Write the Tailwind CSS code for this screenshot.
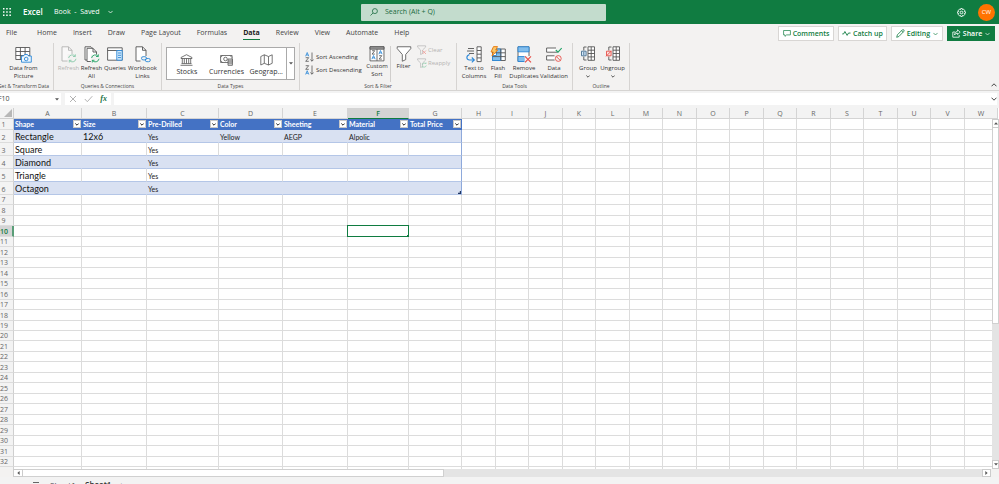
<!DOCTYPE html>
<html lang="en">
<head>
<meta charset="utf-8">
<title>Book - Excel</title>
<script src="https://cdn.jsdelivr.net/npm/@tailwindcss/browser@4"></script>
</head>
<body class="h-screen overflow-hidden flex flex-col bg-[#f3f2f1] font-['Open_Sans','Noto_Sans',sans-serif] text-[7px] leading-[8px] text-[#444]">

<!-- Title bar -->
<header class="h-6 shrink-0 bg-[#107c41] text-white grid grid-cols-[361fr_245fr_393fr] items-center">
  <div class="flex items-center pl-[3px]">
    <button aria-label="App launcher" class="w-2 h-2"><svg viewBox="0 0 8 8" class="w-2 h-2" fill="#fff"><path d="M0 0h1.5v1.5H0zM3.2 0h1.5v1.5H3.2zM6.4 0h1.5v1.5H6.4zM0 3.2h1.5v1.5H0zM3.2 3.2h1.5v1.5H3.2zM6.4 3.2h1.5v1.5H6.4zM0 6.4h1.5v1.5H0zM3.2 6.4h1.5v1.5H3.2zM6.4 6.4h1.5v1.5H6.4z"/></svg></button>
    <span class="ml-3 w-[31px] text-[8px] font-semibold">Excel</span>
    <button class="flex items-center gap-2 whitespace-nowrap">Book&nbsp; -&nbsp; Saved
      <svg viewBox="0 0 6 4" class="w-[5px] h-[4px]" fill="none" stroke="#fff" stroke-width=".9"><path d="M.5.7 3 3.2 5.500.7"/></svg></button>
  </div>
  <label class="h-[17px] rounded-[1px] bg-[#c3dccd] flex items-center text-[#1b6b40]">
    <svg viewBox="0 0 8 8" class="w-2 h-2 ml-[9px] mr-[7px]" fill="none" stroke="#1b6b40" stroke-width=".8"><circle cx="4.900" cy="3.100" r="2.500"/><path d="M3 5 .5 7.500"/></svg>
    <input type="text" aria-label="Search" placeholder="Search (Alt + Q)" class="flex-1 min-w-0 outline-none placeholder:text-[#1b6b40]">
  </label>
  <div class="flex items-center justify-end gap-3 pr-[4px]">
    <button aria-label="Settings"><svg viewBox="0 0 16 16" class="w-[9px] h-[9px] block" fill="none" stroke="#fff" stroke-width="1.600"><path d="M6.600 1h2.800l.5 2 1.700-.9 2.100 2.100-1 1.700 2.200.6v3l-2.200.6 1 1.700-2.100 2.100-1.700-.9-.5 2H6.600l-.5-2-1.700.9-2.100-2.100 1-1.700L1.100 9.500v-3l2.200-.6-1-1.700 2.100-2.100 1.700.9z"/><circle cx="8" cy="8" r="2.300"/></svg></button>
    <button aria-label="Account" class="w-[17px] h-[17px] rounded-full bg-[#ff7300] text-[6px] text-center">CW</button>
  </div>
</header>

<!-- Ribbon tabs -->
<div class="h-[19px] shrink-0 flex justify-between">
  <nav class="flex pl-[6px] pt-[5px] gap-4 whitespace-nowrap items-start text-[#444]">
    <a href="#" class="mr-1">File</a><a href="#">Home</a><a href="#">Insert</a><a href="#">Draw</a><a href="#">Page Layout</a><a href="#">Formulas</a>
    <a href="#" class="font-bold text-[#222] border-b border-[#107c41] pb-[2px]">Data</a>
    <a href="#">Review</a><a href="#">View</a><a href="#">Automate</a><a href="#">Help</a>
  </nav>
  <div class="flex gap-1 pt-[2px] pr-1 whitespace-nowrap font-semibold text-[#107c41]">
    <button class="h-[15px] w-[56px] border border-[#d8d6d4] bg-white flex items-center justify-center gap-[2px]">
      <svg viewBox="0 0 9 8" class="w-2 h-[7px]" fill="none" stroke="#107c41" stroke-width=".8"><path d="M.6.6h7.800v5H4L2.200 7.300V5.600H.6z"/></svg>Comments</button>
    <button class="h-[15px] w-[49px] border border-[#d8d6d4] bg-white flex items-center justify-center gap-[2px]">
      <svg viewBox="0 0 10 7" class="w-[9px] h-[7px]" fill="none" stroke="#107c41"><path d="M.3 4h1.500L3.200 1.300 5.700 5.600 7.200 3h2.300"/></svg>Catch up</button>
    <button class="h-[15px] w-[52px] border border-[#d8d6d4] bg-white flex items-center justify-center gap-[2px]">
      <svg viewBox="0 0 9 9" class="w-[9px] h-[9px]" fill="none" stroke="#107c41" stroke-width=".8"><path d="m.7 8.300.7-2.500L6.300.9q.8-.6 1.500 0 .6.8 0 1.500L2.900 7.500zM5.500 1.700l1.600 1.600"/></svg>Editing
      <svg viewBox="0 0 6 4" class="w-[5px] h-[4px] ml-px" fill="none" stroke="#107c41" stroke-width=".8"><path d="M.5.7 3 3.200 5.500.7"/></svg></button>
    <button class="h-[15px] w-[48px] bg-[#107c41] text-white flex items-center justify-center gap-[2px]">
      <svg viewBox="0 0 9 9" class="w-[9px] h-[9px]" fill="none" stroke="#fff" stroke-width=".8"><path d="M3 3H.8v5.200h6.400V6M5.500.8l2.700 2.400-2.700 2.400V4.200Q3.700 4 2.500 6 2.700 2.500 5.500 2.200z"/></svg>Share
      <svg viewBox="0 0 6 4" class="w-[5px] h-[4px] ml-px" fill="none" stroke="#fff" stroke-width=".8"><path d="M.5.7 3 3.200 5.500.7"/></svg></button>
  </div>
</div>

<!-- Ribbon -->
<div class="h-[48px] shrink-0 flex border-b border-[#d6d4d2] text-center whitespace-nowrap relative text-[6px] leading-[8px] text-[#333]">
  <section class="w-[54px] pr-[6px] border-r border-[#d6d4d2] flex flex-col justify-between items-center">
    <button class="pt-[3px] flex flex-col items-center"><svg viewBox="0 0 17 17" class="w-[17px] h-[17px] mb-[1px]" fill="none" stroke="#555" stroke-width=".9"><path fill="#fff" d="M.8 1.500h14v12h-14z"/><path d="M.8 5.500h14M.8 9.500h14M5.400 1.500v12M10.100 1.500v12"/><path fill="#eef6fc" stroke="#2b88d8" d="M6.500 10h2l1-1.500h3l1 1.500h2.800v6.200H6.500z"/><circle stroke="#2b88d8" cx="11.200" cy="13" r="1.800"/></svg>Data from<br>Picture</button>
    <h2 class="text-[5px] text-[#444]">Get &amp; Transform Data</h2>
  </section>

  <section class="w-[108px] border-r border-[#d6d4d2] flex flex-col justify-between items-center">
    <div class="flex pt-[3px] items-start">
      <button disabled class="w-[23px] flex flex-col items-center text-[#b5b3b1]"><svg viewBox="0 0 16 17" class="w-4 h-[17px] mb-[1px] opacity-50" fill="none" stroke="#777" stroke-width=".9"><path fill="#fff" d="M1 .8h6.500L11 4.300V15H1z"/><path d="M7.500.8v3.500H11"/><path fill="#f3f2f1" stroke="none" d="M6.500 8H16v9H6.500z"/><path stroke="#21a366" d="M7.600 12a3.700 3.700 0 0 1 6.700-1.500V8.300M14.300 10.500H12M15 12.800a3.700 3.700 0 0 1-6.700 1.500v2.200M8.300 14.300h2.200"/></svg>Refresh</button>
      <button class="w-[23px] flex flex-col items-center"><svg viewBox="0 0 16 17" class="w-4 h-[17px] mb-[1px]" fill="none" stroke="#555" stroke-width=".9"><path fill="#fff" d="M1 .8h6l1 1V14H1z"/><path fill="#fff" d="M3 2.300h6L12.500 6v9.500H3z"/><path d="M9 2.300V6h3.500"/><path fill="#f3f2f1" stroke="none" d="M6.800 8.500H16V17H6.800z"/><path stroke="#21a366" d="M7.600 12a3.700 3.700 0 0 1 6.700-1.500V8.300M14.300 10.500H12M15 12.800a3.700 3.700 0 0 1-6.700 1.500v2.200M8.300 14.300h2.200"/></svg>Refresh<br>All</button>
      <button class="w-[24px] flex flex-col items-center"><svg viewBox="0 0 16 17" class="w-4 h-[17px] mb-[1px]" fill="none" stroke="#555" stroke-width=".9"><path fill="#fff" d="M.6 1.800h14.600v12.400H.6z"/><path d="M.6 4.500h14.600"/><path stroke="#2b88d8" fill="#d5eafa" d="M9.800 4.500h5.400v9.700H9.800zM11 7h3M11 9.300h3M11 11.600h3"/></svg>Queries</button>
      <button class="w-[31px] flex flex-col items-center"><svg viewBox="0 0 16 17" class="w-4 h-[17px] mb-[1px]" fill="none" stroke="#555" stroke-width=".9"><path fill="#fff" d="M1 .8h6.500L11 4.300V15H1z"/><path d="M7.500.8v3.500H11"/><path fill="#f3f2f1" stroke="none" d="M5.500 10H16v7H5.500z"/><g stroke="#2b88d8"><rect x="6.500" y="10.700" width="5" height="3.200" rx="1.600"/><rect x="10.300" y="12.500" width="5" height="3.200" rx="1.600"/></g></svg>Workbook<br>Links</button>
    </div>
    <h2 class="text-[5px] text-[#444]">Queries &amp; Connections</h2>
  </section>

  <section class="w-[138px] border-r border-[#d6d4d2] flex flex-col justify-between items-center">
    <div class="mt-[4px] h-[33px] w-[129px] border border-[#aaa] bg-white flex items-stretch text-[7px]">
      <button class="flex-1 flex flex-col items-center justify-end pb-[3px]"><svg viewBox="0 0 13 12" class="w-[13px] h-[12px] mb-[2px]" fill="none" stroke="#555" stroke-width=".8"><path d="M1 3.500 6.500.7 12 3.500v1H1zM2.300 4.500v5M4.300 4.500v5M6.500 4.500v5M8.700 4.500v5M10.700 4.500v5M1.500 9.600h10M.5 11.300h12"/></svg>Stocks</button>
      <button class="flex-1 flex flex-col items-center justify-end pb-[3px]"><svg viewBox="0 0 13 12" class="w-[13px] h-[12px] mb-[2px]" fill="none" stroke="#555" stroke-width=".8"><path d="M.6 1.500h11.500v7H.6zM.6 3.500l2-2M.6 6.500l2 2M10 1.500l2 2"/><circle cx="5.500" cy="5" r="1.800"/><path fill="#ddd" d="M8 5h4.400v6.300H8zM8 7h4.400M8 9h4.400"/></svg>Currencies</button>
      <button class="flex-1 flex flex-col items-center justify-end pb-[3px]"><svg viewBox="0 0 13 12" class="w-[13px] h-[12px] mb-[2px]" fill="none" stroke="#555" stroke-width=".8"><path d="m.8 2.500 3.500-1.700 4.200 1.700 3.700-1.700v8.500l-3.700 1.700-4.200-1.700L.8 11zM4.300.8v8.500M8.500 2.500V11"/></svg>Geograp...</button>
      <button aria-label="More data types" class="w-2 border-l border-[#aaa] flex items-center justify-center"><svg viewBox="0 0 4 3" class="w-[4px] h-[3px]" fill="#555"><path d="M0 .3h4L2 2.600z"/></svg></button>
    </div>
    <h2 class="text-[5px] text-[#444]">Data Types</h2>
  </section>

  <section class="w-[157px] border-r border-[#d6d4d2] flex flex-col justify-between items-center">
    <div class="flex w-full pl-[5px] pt-[3px] items-start">
      <div class="w-[60px] flex flex-col gap-[3px] pt-[6px]">
        <button class="flex items-center gap-[2px] h-[10px]"><svg viewBox="0 0 9 10" class="w-[9px] h-[10px] shrink-0" fill="none" stroke="#555" stroke-width=".8"><path stroke="#2b88d8" d="M.6 4.300 2.200.5l1.600 3.800M1.200 3h2"/><path d="M.7 5.700h3L.7 9.300h3.100M7 .5v8.700M5.300 7.500 7 9.200l1.700-1.700"/></svg>Sort Ascending</button>
        <button class="flex items-center gap-[2px] h-[10px]"><svg viewBox="0 0 9 10" class="w-[9px] h-[10px] shrink-0" fill="none" stroke="#555" stroke-width=".8"><path d="M.7.7h3l-3 3.600h3.100M7 .5v8.700M5.300 7.500 7 9.200l1.700-1.700"/><path stroke="#2b88d8" d="M.6 9.500 2.200 5.700l1.600 3.800M1.200 8.300h2"/></svg>Sort Descending</button>
      </div>
      <button class="w-[24px] flex flex-col items-center"><svg viewBox="0 0 16 17" class="w-4 h-4" fill="none" stroke="#555" stroke-width=".9"><path fill="#fff" d="M.6.800h14.800v15H.6z"/><path fill="#999" d="M.6.800h14.800v2.600H.6z"/><path d="M8 3.400v12.400M2.800 5h2.800L2.800 8.600h2.900M10.300 10.300h2.800l-2.800 3.600h2.900"/><path stroke="#2b88d8" d="m2.600 14 1.700-3.900L6 14M3.200 12.600h2.200M10 8.700l1.700-3.900 1.700 3.900M10.600 7.300h2.200"/></svg>Custom<br>Sort</button>
      <div class="w-[2px] h-[36px] border-r border-[#d0cecc]"></div>
      <button class="w-[25px] flex flex-col items-center"><svg viewBox="0 0 16 17" class="w-4 h-4" fill="none" stroke="#555" stroke-width=".9"><path fill="#fff" d="M.8.800h14.400v2L9.800 9v5.500l-3.600 1.700V9L.8 2.800z"/></svg>Filter</button>
      <div class="flex flex-col gap-[3px] -mt-px pl-px text-[#b5b3b1]">
        <button disabled class="flex items-center gap-px h-[10px]"><svg viewBox="0 0 10 10" class="w-[10px] h-[10px] shrink-0" fill="none" stroke="#bbb" stroke-width=".8"><path d="M.6.800h8v1.300L5.600 5v3.500l-2 1V5l-3-2.900z"/><path stroke="#f09a96" d="m5.500 5.500 3.500 3.500M9 5.500 5.500 9"/></svg>Clear</button>
        <button disabled class="flex items-center gap-px h-[10px]"><svg viewBox="0 0 10 10" class="w-[10px] h-[10px] shrink-0" fill="none" stroke="#bbb" stroke-width=".8"><path d="M.6.800h8v1.300L5.600 5v3.500l-2 1V5l-3-2.900z"/><path stroke="#93cfae" d="M5.300 6.800A2.100 2.100 0 0 1 9 5.800V4.500M9.300 7.500a2.100 2.100 0 0 1-3.700.8v1.300"/></svg>Reapply</button>
      </div>
    </div>
    <h2 class="text-[5px] text-[#444]">Sort &amp; Filter</h2>
  </section>

  <section class="w-[116px] border-r border-[#d6d4d2] flex flex-col justify-between items-center">
    <div class="flex pt-[3px] items-start">
      <button class="w-[27px] flex flex-col items-center"><svg viewBox="0 0 16 17" class="w-4 h-[17px] mb-[1px]" fill="none" stroke="#555" stroke-width=".9"><path d="M2 2.500h6M1 5h7M3 7.500h5"/><path fill="#fff" d="M11 .8h4.200v14.800H11z"/><path d="M11 4.500h4.200M11 8.200h4.200M11 11.900h4.200"/><path stroke="#2b88d8" stroke-width="1.100" d="M3.500 8.500C-.5 10 .5 14 3.500 14H8M5.800 11.500 8.300 14l-2.500 2.300"/></svg>Text to<br>Columns</button>
      <button class="w-[21px] flex flex-col items-center"><svg viewBox="0 0 16 17" class="w-4 h-[17px] mb-[1px]" fill="none" stroke="#555" stroke-width=".9"><path fill="#fff" d="M2.500 3h12.800v11.500H2.500z"/><path fill="#83beec" stroke="#2b88d8" d="M6.500 3h4.300v11.500H2.500V9.500h4z"/><path d="M2.500 6.800h12.800M2.500 10.600h12.800M10.800 3v11.500"/><path fill="#f9c76a" stroke="#e8780c" d="M3.500.6h4L5.700 4h2L2 10l1.300-4H1z"/></svg>Flash<br>Fill</button>
      <button class="w-[31px] flex flex-col items-center"><svg viewBox="0 0 16 17" class="w-4 h-[17px] mb-[1px]" fill="none" stroke="#555" stroke-width=".9"><path fill="#fff" d="M2 .8h11v14.700H2z"/><path fill="#83beec" stroke="#2b88d8" d="M2 .8h11v5H2zM2 10.500h7v5H2z"/><path fill="#f3f2f1" stroke="none" d="M8.500 10H16v7H8.500z"/><path stroke="#e8514b" stroke-width="1.200" d="m9 10.300 6 6M15 10.300l-6 6"/></svg>Remove<br>Duplicates</button>
      <button class="w-[29px] flex flex-col items-center"><svg viewBox="0 0 16 17" class="w-4 h-[17px] mb-[1px]" fill="none" stroke="#555" stroke-width=".9"><path fill="#fff" d="M10 2H.6v4.200h11M8.500 9.800H.6V14h8"/><path stroke="#21a366" stroke-width="1.100" d="m9.800 4 2.200 2.200L15.700 2"/><circle stroke="#e8514b" cx="12.300" cy="12.500" r="2.900"/><path stroke="#e8514b" d="m10.300 10.500 4 4"/></svg>Data<br>Validation</button>
    </div>
    <h2 class="text-[5px] text-[#444]">Data Tools</h2>
  </section>

  <section class="w-[57px] border-r border-[#d6d4d2] flex flex-col justify-between items-center">
    <div class="flex pt-[3px] items-start">
      <button class="w-[23px] flex flex-col items-center"><svg viewBox="0 0 16 17" class="w-4 h-[17px] mb-[1px]" fill="none" stroke="#555" stroke-width=".9"><path fill="#fff" d="M8 .8h6.500v13.500H8z"/><path d="M8 4.200h6.500M8 7.500h6.500M8 10.900h6.500M11.200.8v13.500M6.500 1H3.800v3.500M6.500 14H3.800v-3.500"/><path fill="#d5eafa" stroke="#456d8f" d="M1.500 5.200h4.600v4.600H1.500zM3.800 6v3"/></svg>Group<svg viewBox="0 0 4 3" class="w-[4px] h-[3px] mt-[3px]" fill="none" stroke="#444" stroke-width=".9"><path d="M.3.500 2 2.200 3.700.5"/></svg></button>
      <button class="w-[26px] flex flex-col items-center"><svg viewBox="0 0 16 17" class="w-4 h-[17px] mb-[1px]" fill="none" stroke="#555" stroke-width=".9"><path fill="#fff" d="M8 .8h6.500v13.500H8z"/><path d="M8 4.200h6.500M8 7.500h6.500M8 10.900h6.500M11.200.8v13.500M6.500 1H3.800v3.500M6.500 14H3.800v-3.500"/><path fill="#fbdcda" stroke="#e8514b" d="M1.500 5.200h4.600v4.600H1.500zM1 10.300l5.600-5.600"/></svg>Ungroup<svg viewBox="0 0 4 3" class="w-[4px] h-[3px] mt-[3px]" fill="none" stroke="#444" stroke-width=".9"><path d="M.3.500 2 2.200 3.700.5"/></svg></button>
    </div>
    <h2 class="text-[5px] text-[#444]">Outline</h2>
  </section>
  <button aria-label="Collapse ribbon" class="ml-auto self-end mb-[3px] mr-[2px]"><svg viewBox="0 0 6 4" class="w-[6px] h-[4px] block" fill="none" stroke="#444"><path d="M.5 3.300 3 .8l2.500 2.500"/></svg></button>
</div>

<!-- Formula bar -->
<div class="h-[17px] shrink-0 bg-[#f3f3f3] flex gap-1 pt-[2px] pb-[3px] pr-[2px]">
  <div class="w-[61px] bg-white flex items-center justify-between pr-[2px] overflow-hidden">
    <input aria-label="Name box" value="F10" class="-ml-[2px] w-8 outline-none">
    <button aria-label="Name list"><svg viewBox="0 0 4 3" class="w-[4px] h-[3px] block" fill="#555"><path d="M0 .3h4L2 2.600z"/></svg></button>
  </div>
  <div class="w-[46px] bg-white flex items-center justify-between px-[4px]">
    <button aria-label="Cancel"><svg viewBox="0 0 8 8" class="w-2 h-2 block" stroke="#aaa" stroke-width=".9"><path d="m1 1 6 6M7 1 1 7"/></svg></button>
    <button aria-label="Enter"><svg viewBox="0 0 9 8" class="w-[9px] h-2 block" fill="none" stroke="#aaa" stroke-width=".9"><path d="m.8 4 2.500 2.700L8.300 1.200"/></svg></button>
    <button aria-label="Insert function" class="text-[8px] italic font-bold font-['Liberation_Serif',serif] text-[#217346]">fx</button>
  </div>
  <div class="flex-1 bg-white flex items-center -ml-px">
    <input aria-label="Formula" class="flex-1 outline-none">
    <button aria-label="Expand formula bar"><svg viewBox="0 0 6 4" class="w-[6px] h-[4px] block" fill="none" stroke="#444"><path d="M.5.700 3 3.200 5.500.7"/></svg></button>
  </div>
</div>

<!-- Sheet -->
<main class="flex-1 min-h-0 relative overflow-hidden bg-white">
  <table id="sheet" class="table-fixed border-separate border-spacing-0">
    <colgroup id="cols"></colgroup>
    <thead id="head"></thead>
    <tbody id="body"></tbody>
  </table>
  <div class="absolute right-0 top-[11px] bottom-0 w-[7px] bg-[#e4e4e4] flex flex-col">
    <button aria-label="Scroll up" class="h-[9px] shrink-0 bg-white border border-[#ccc] flex items-center justify-center"><svg viewBox="0 0 4 3" class="w-[4px] h-[3px]" fill="#555"><path d="M0 2.600h4L2 .3z"/></svg></button>
    <div class="h-[56%] bg-white border border-t-0 border-[#d0d0d0]"></div>
    <button aria-label="Scroll down" class="h-[9px] mt-auto shrink-0 bg-white border border-[#ccc] flex items-center justify-center"><svg viewBox="0 0 4 3" class="w-[4px] h-[3px]" fill="#555"><path d="M0 .3h4L2 2.600z"/></svg></button>
  </div>
</main>
<div class="h-2 shrink-0 ml-[13px] mr-[8px] bg-[#e4e4e4] flex">
  <button aria-label="Scroll left" class="w-[10px] bg-white border border-[#ccc] flex items-center justify-center"><svg viewBox="0 0 3 4" class="w-[3px] h-[4px]" fill="#555"><path d="M2.600 0v4L.3 2z"/></svg></button>
  <div class="w-[43%] bg-white border border-l-0 border-[#d0d0d0]"></div>
  <button aria-label="Scroll right" class="w-[9px] ml-auto bg-white border border-[#ccc] flex items-center justify-center"><svg viewBox="0 0 3 4" class="w-[3px] h-[4px]" fill="#555"><path d="M.3 0v4l2.300-2z"/></svg></button>
</div>
<footer class="h-[7px] shrink-0 overflow-hidden bg-[#f3f3f3] flex items-start pt-[4px] pl-[33px] text-[8px] leading-[8px]">
  <button aria-label="All sheets" class="w-[6px] h-[6px] mt-px border-y border-[#666] mr-[11px]"></button>
  <button class="w-[35px] text-left whitespace-nowrap">Sheet1</button>
  <button class="w-[34px] text-left font-semibold text-[#333]">Sheet1</button>
  <button aria-label="New sheet">+</button>
</footer>

<script>
const widths = [68, 65, 72, 64, 65, 61, 53];
for (let i = 0; i < 16; i++) widths.push(i % 2 ? 33 : 34);
const letters = 'ABCDEFGHIJKLMNOPQRSTUVW';
const titles = ['Shape', 'Size', 'Pre-Drilled', 'Color', 'Sheeting', 'Material', 'Total Price'];
const data = [
  ['Rectangle', '12x6', 'Yes', 'Yellow', 'AEGP', 'Alpolic', ''],
  ['Square', '', 'Yes', '', '', '', ''],
  ['Diamond', '', 'Yes', '', '', '', ''],
  ['Triangle', '', 'Yes', '', '', '', ''],
  ['Octagon', '', 'Yes', '', '', '', '']
];
const arrow = '<button aria-label="Filter column" class="w-[8px] h-[8px] mr-px shrink-0 bg-white border border-[#c8c8c8] flex items-center justify-center"><svg viewBox="0 0 4 3" class="w-[4px] h-[3px]" fill="none" stroke="#222"><path d="M.3.500 2 2.200 3.700.5"/></svg></button>';
document.getElementById('sheet').style.width = widths.reduce((a, b) => a + b, 14) + 'px';
document.getElementById('cols').innerHTML = '<col class="w-[14px]">' + widths.map(w => `<col style="width:${w}px">`).join('');
document.getElementById('head').innerHTML = '<tr><th class="h-[11px] p-0 bg-[#f3f3f3] border-r border-b border-[#cfcfcf]"><svg viewBox="0 0 9 9" class="w-[8px] h-[8px] ml-[4px] block" fill="#b7b7b7"><path d="M9 0v9H0z"/></svg></th>' +
  [...letters].map(l => `<th scope="col" class="p-0 font-normal leading-[9px] border-r border-b ${l === 'F' ? 'bg-[#d4d4d4] text-[#107c41] font-semibold border-r-[#d4d4d4] border-b-[#107c41]' : 'bg-[#f3f3f3] text-[#666] border-[#d4d4d4]'}">${l}</th>`).join('') + '</tr>';

let html = '';
for (let r = 1; r <= 33; r++) {
  const tall = r > 1 && r < 7;
  const k = r - 7;
  const eleven = r === 1 || Math.round((k + 1) * 272 / 26) - Math.round(k * 272 / 26) === 11;
  const h = tall ? 'h-[13px]' : eleven ? 'h-[11px]' : 'h-[10px]';
  html += `<tr><th scope="row" class="${h} p-0 align-bottom leading-[9px] whitespace-nowrap border-b border-b-[#dcdcdc] ${r === 10 ? 'pr-[5px] bg-[#d4d4d4] text-[#107c41] font-semibold border-r-2 border-r-[#5a9e78]' : 'pr-[6px] bg-[#f3f3f3] text-[#666] font-normal border-r border-r-[#cfcfcf]'}">${r < 33 ? r : ''}</th>`;
  for (let c = 0; c < 23; c++) {
    if (r === 1 && c < 7) {
      html += `<td class="p-0 bg-[#4472c4] border-b border-[#4472c4]"><div class="flex items-center justify-between h-[10px] pl-[1px] font-['Lato',sans-serif] font-bold text-white whitespace-nowrap leading-[9px] overflow-hidden">${titles[c]}${arrow}</div></td>`;
    } else if (tall && c < 7) {
      const big = c < 2 ? "text-[9px] leading-[11px] text-[#111] align-middle" : 'text-[7px] leading-[9px] text-[#222] align-bottom';
      html += `<td class="p-0 pl-px font-['Lato',sans-serif] whitespace-nowrap border-b border-b-[#b4c6e7] border-r ${c === 6 ? 'border-r-[#8ea9db] relative' : r % 2 ? 'border-r-[#dcdcdc]' : 'border-r-[#d9e1f2]'} ${r % 2 ? 'bg-white' : 'bg-[#d9e1f2]'} ${big}">${data[r - 2][c]}${r === 6 && c === 6 ? '<span class="absolute right-0 bottom-0 w-[3px] h-[3px] bg-[#203764] [clip-path:polygon(100%_0,100%_100%,0_100%,0_60%,60%_60%,60%_0)]"></span>' : ''}</td>`;
    } else if (r === 10 && c === 5) {
      html += '<td class="p-0 relative border-r border-b border-[#dcdcdc]"><span class="absolute -inset-px border border-[#107c41]"></span><span class="absolute -right-px -bottom-px w-[2px] h-[2px] bg-[#107c41]"></span></td>';
    } else {
      html += '<td class="p-0 border-r border-b border-[#dcdcdc]"></td>';
    }
  }
  html += '</tr>';
}
document.getElementById('body').innerHTML = html;
</script>
</body>
</html>
